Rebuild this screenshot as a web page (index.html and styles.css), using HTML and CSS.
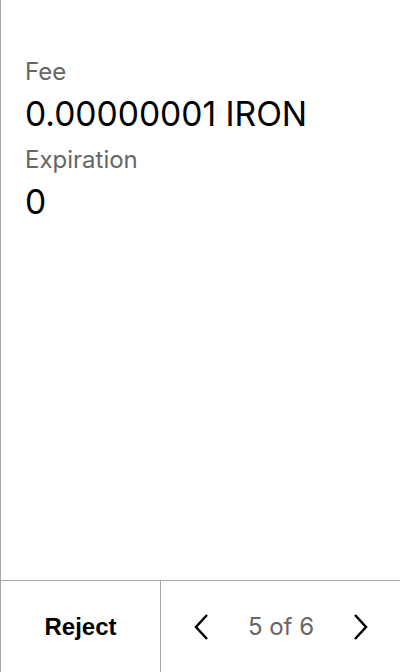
FILE: index.html
```html
<!DOCTYPE html>
<html>
<head>
<meta charset="utf-8">
<link rel="stylesheet" href="styles.css">
</head>
<body>
<div class="app">
  <div class="content">
    <div class="label">Fee</div>
    <div class="value">0.00000001 IRON</div>
    <div class="label">Expiration</div>
    <div class="value">0</div>
  </div>
  <div class="footer">
    <div class="reject">Reject</div>
    <div class="pager">
      <svg class="chev" width="16" height="28" viewBox="0 0 16 28"><path d="M14 2 L3 14 L14 26" fill="none" stroke="#000" stroke-width="2.5"/></svg>
      <span class="count">5 of 6</span>
      <svg class="chev" width="16" height="28" viewBox="0 0 16 28"><path d="M2 2 L13 14 L2 26" fill="none" stroke="#000" stroke-width="2.5"/></svg>
    </div>
  </div>
</div>
</body>
</html>
```
FILE: styles.css
```css
html, body { margin: 0; padding: 0; background: #fff; }
.app {
  width: 400px;
  height: 672px;
  box-sizing: border-box;
  border-left: 1px solid #a8a8a8;
  display: flex;
  flex-direction: column;
}
.content {
  flex: 1;
  padding: 56px 24px 0 24px;
  font-family: Inter, sans-serif;
}
.label {
  font-size: 24px;
  color: #666;
  line-height: 32px;
}
.value {
  font-size: 33.6px;
  color: #000;
  line-height: 40px;
  margin: 6px 0 10px 0;
}
.footer {
  height: 91px;
  flex-shrink: 0;
  border-top: 1px solid #a8a8a8;
  display: flex;
  font-family: "Liberation Sans", Arial, sans-serif;
}
.reject {
  width: 159px;
  border-right: 1px solid #a8a8a8;
  display: flex;
  align-items: center;
  justify-content: center;
  font-weight: bold;
  font-size: 24px;
}
.pager {
  flex: 1;
  display: flex;
  align-items: center;
  justify-content: space-between;
  padding: 0 31px 0 32px;
}
.count {
  font-family: Inter, sans-serif;
  font-size: 24px;
  color: #666;
}
```
